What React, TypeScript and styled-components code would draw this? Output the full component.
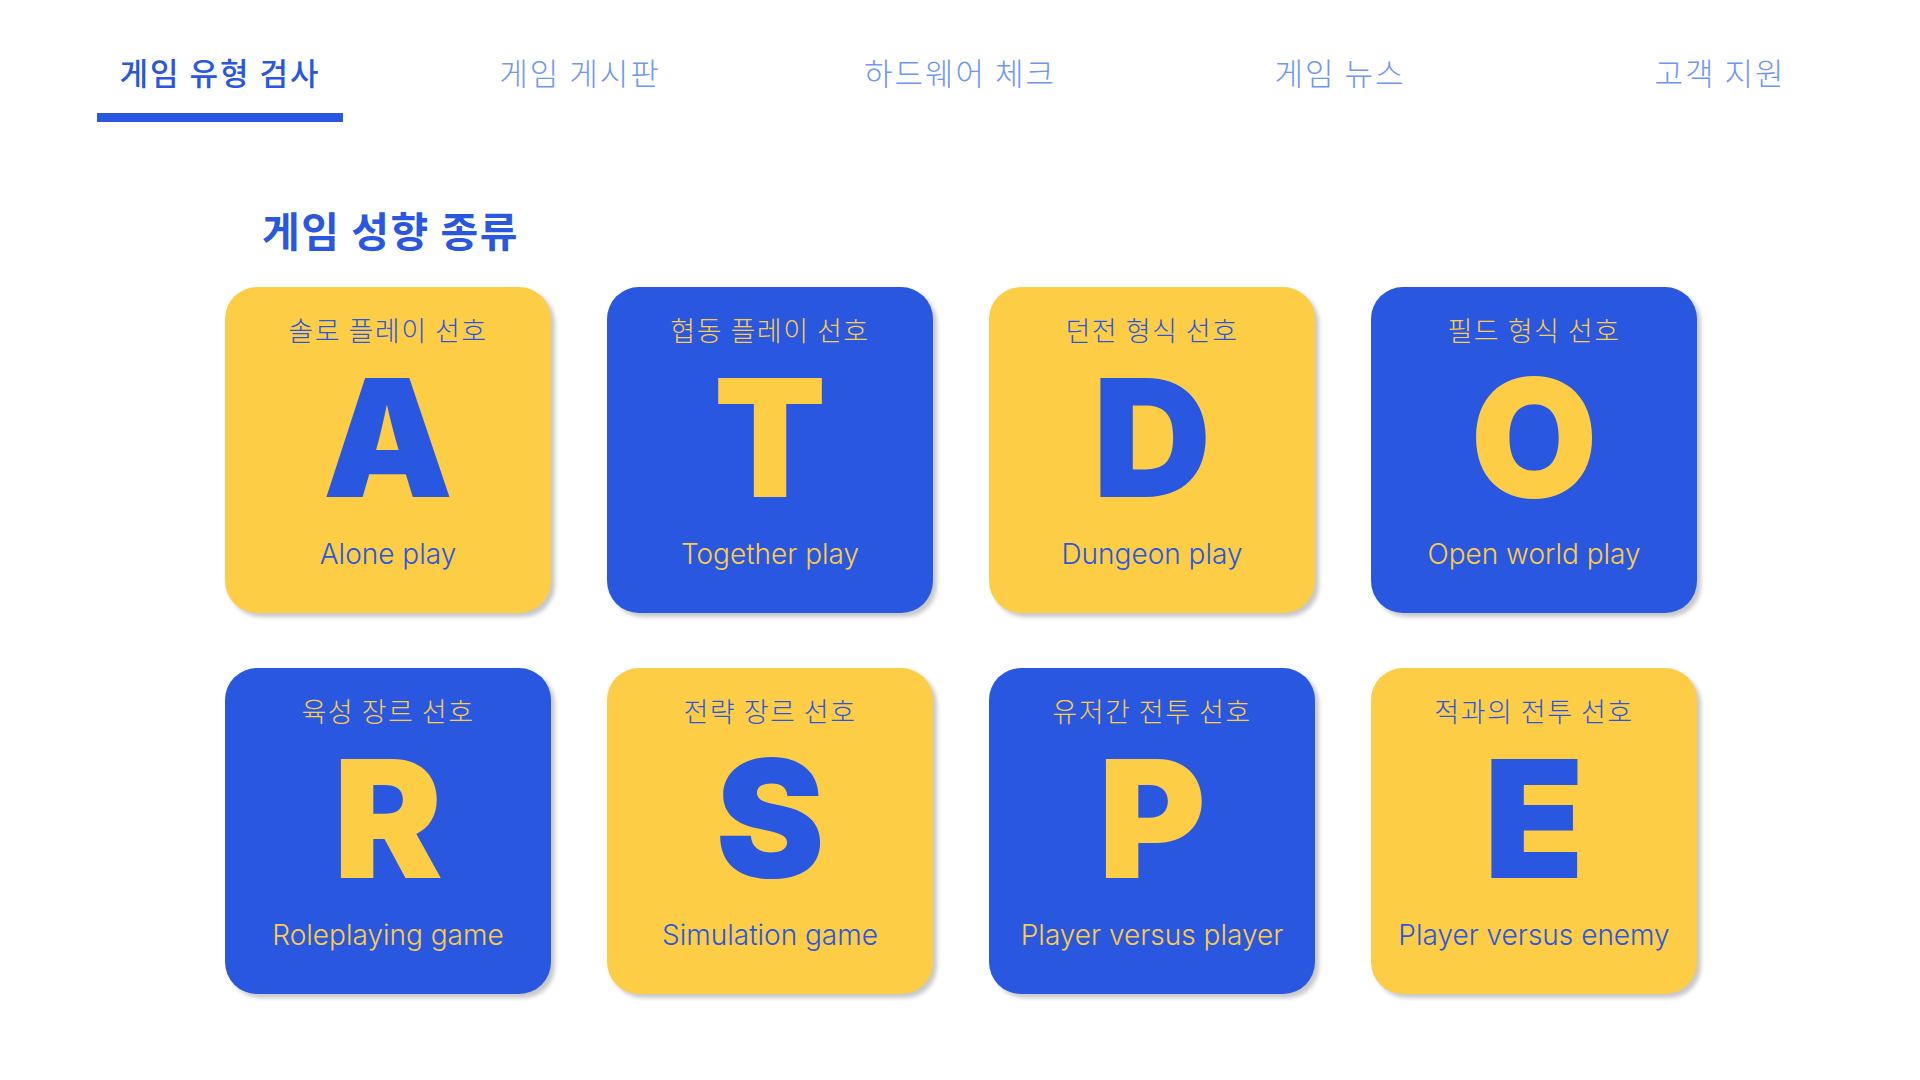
import React from "react";
import styled, { createGlobalStyle } from "styled-components";

const BLUE = "#2957e0";
const YELLOW = "#fdcd45";

const GlobalStyle = createGlobalStyle`
  html, body {
    margin: 0;
    padding: 0;
    background: #ffffff;
  }
  body {
    font-family: "Noto Sans CJK KR", "Inter", sans-serif;
  }
`;

const Page = styled.div`
  width: 1920px;
  min-height: 1080px;
  background: #ffffff;
  overflow: hidden;
`;

const Nav = styled.nav`
  display: flex;
  padding: 54px 10px 0;
`;

const Tab = styled.div`
  flex: 0 0 380px;
  box-sizing: border-box;
  display: flex;
  justify-content: center;

  &:first-child {
    padding-left: 40px;
  }
`;

const TabLabel = styled.span<{ $active?: boolean }>`
  display: block;
  padding: 0 22px 23px;
  font-family: "Noto Sans CJK KR", sans-serif;
  font-size: 31px;
  line-height: 36px;
  letter-spacing: 2px;
  white-space: nowrap;
  font-weight: ${(p) => (p.$active ? 500 : 300)};
  color: ${(p) => (p.$active ? BLUE : "#6f96f6")};
  border-bottom: 9px solid ${(p) => (p.$active ? BLUE : "transparent")};
  cursor: pointer;
`;

const Section = styled.section`
  width: 1470px;
  margin: 83px auto 0;
`;

const Heading = styled.h2`
  margin: 0 0 34px 37px;
  font-family: "Noto Sans CJK KR", sans-serif;
  font-size: 41px;
  line-height: 48px;
  letter-spacing: 1.5px;
  font-weight: 700;
  color: ${BLUE};
`;

const Grid = styled.div`
  display: grid;
  grid-template-columns: repeat(4, 326px);
  gap: 55px 56px;
`;

const Card = styled.div<{ $tone: "yellow" | "blue" }>`
  height: 326px;
  box-sizing: border-box;
  padding-top: 26px;
  border-radius: 32px;
  display: flex;
  flex-direction: column;
  align-items: center;
  background: ${(p) => (p.$tone === "yellow" ? YELLOW : BLUE)};
  color: ${(p) => (p.$tone === "yellow" ? BLUE : YELLOW)};
  box-shadow: 4px 4px 4px rgba(0, 0, 0, 0.22);
`;

const CardLabel = styled.div`
  font-family: "Noto Sans CJK KR", sans-serif;
  font-size: 27px;
  line-height: 34px;
  letter-spacing: 1.5px;
  font-weight: 300;
`;

const Letter = styled.div`
  margin-top: 26px;
  font-family: "Inter", "Roboto", sans-serif;
  font-size: 164px;
  line-height: 130px;
  font-weight: 900;
`;

const Caption = styled.div`
  margin-top: 34px;
  font-family: "Inter", sans-serif;
  font-size: 28px;
  line-height: 35px;
  font-weight: 300;
`;

const tabs = ["게임 유형 검사", "게임 게시판", "하드웨어 체크", "게임 뉴스", "고객 지원"];

const types: { label: string; letter: string; caption: string; tone: "yellow" | "blue" }[] = [
  { label: "솔로 플레이 선호", letter: "A", caption: "Alone play", tone: "yellow" },
  { label: "협동 플레이 선호", letter: "T", caption: "Together play", tone: "blue" },
  { label: "던전 형식 선호", letter: "D", caption: "Dungeon play", tone: "yellow" },
  { label: "필드 형식 선호", letter: "O", caption: "Open world play", tone: "blue" },
  { label: "육성 장르 선호", letter: "R", caption: "Roleplaying game", tone: "blue" },
  { label: "전략 장르 선호", letter: "S", caption: "Simulation game", tone: "yellow" },
  { label: "유저간 전투 선호", letter: "P", caption: "Player versus player", tone: "blue" },
  { label: "적과의 전투 선호", letter: "E", caption: "Player versus enemy", tone: "yellow" },
];

const App: React.FC = () => {
  return (
    <Page>
      <GlobalStyle />
      <Nav>
        {tabs.map((t, i) => (
          <Tab key={t}>
            <TabLabel $active={i === 0}>{t}</TabLabel>
          </Tab>
        ))}
      </Nav>
      <Section>
        <Heading>게임 성향 종류</Heading>
        <Grid>
          {types.map((c) => (
            <Card key={c.letter} $tone={c.tone}>
              <CardLabel>{c.label}</CardLabel>
              <Letter>{c.letter}</Letter>
              <Caption>{c.caption}</Caption>
            </Card>
          ))}
        </Grid>
      </Section>
    </Page>
  );
};

export default App;
